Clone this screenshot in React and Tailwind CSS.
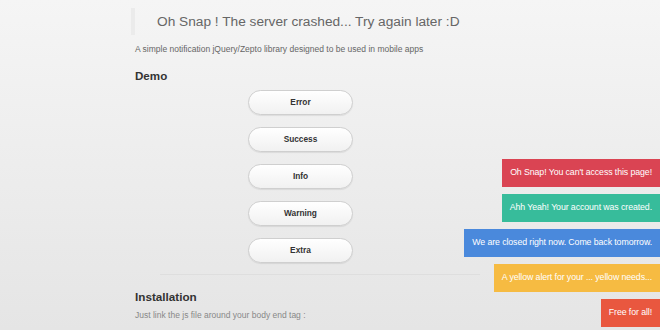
import React from 'react';

const buttons = ['Error', 'Success', 'Info', 'Warning', 'Extra'];

const notes = [
  { text: "Oh Snap! You can't access this page!", color: 'bg-[#da4453]' },
  { text: 'Ahh Yeah! Your account was created.', color: 'bg-[#37bc9b]' },
  { text: 'We are closed right now. Come back tomorrow.', color: 'bg-[#4a89dc]' },
  { text: 'A yellow alert for your ... yellow needs...', color: 'bg-[#f6bb42]' },
  { text: 'Free for all!', color: 'bg-[#e9573f]' },
];

export default function App() {
  return (
    <div
      className="relative w-[660px] h-[330px] overflow-hidden bg-gradient-to-b from-[#f5f5f5] to-[#e5e5e5]"
      style={{ fontFamily: '"Liberation Sans", Arial, sans-serif' }}
    >
      <div className="pl-[131px] pt-[8px]">
        {/* Header */}
        <div className="border-l-4 border-[#ebebeb] h-[27px] flex items-center pl-[22px]">
          <h1 className="text-[13.7px] text-[#666] leading-none">
            Oh Snap ! The server crashed... Try again later :D
          </h1>
        </div>
        <p className="ml-[4px] mt-[8px] text-[8.5px] leading-[12px] text-[#666]">
          A simple notification jQuery/Zepto library designed to be used in mobile apps
        </p>

        {/* Demo */}
        <h2 className="ml-[4px] mt-[14px] text-[11.6px] leading-[14px] font-bold text-[#333]">Demo</h2>
        <div className="ml-[117px] mt-[7px] flex flex-col gap-[12px]">
          {buttons.map(b => (
            <button
              key={b}
              className="w-[105px] h-[25px] rounded-full border border-[#cfcfcf] bg-gradient-to-b from-white to-[#f1f1f1] shadow-[0_1px_1px_rgba(0,0,0,0.08)] text-[8.3px] font-bold text-[#333]"
            >
              {b}
            </button>
          ))}
        </div>

        <div className="ml-[29px] mt-[11px] w-[320px] border-t border-[#dedede]" />

        {/* Installation */}
        <h2 className="ml-[4px] mt-[15px] text-[11.7px] leading-[14px] font-bold text-[#333]">Installation</h2>
        <p className="ml-[4px] mt-[5px] text-[8.5px] leading-[12px] text-[#888]">
          Just link the js file around your body end tag :
        </p>
      </div>

      {/* Notifications */}
      <div className="absolute right-0 top-[159px] flex flex-col items-end gap-[7px]">
        {notes.map(n => (
          <div
            key={n.text}
            className={`${n.color} h-[28px] px-[8px] flex items-center text-white text-[8.8px] tracking-[-0.1px] whitespace-nowrap`}
          >
            {n.text}
          </div>
        ))}
      </div>
    </div>
  );
}
